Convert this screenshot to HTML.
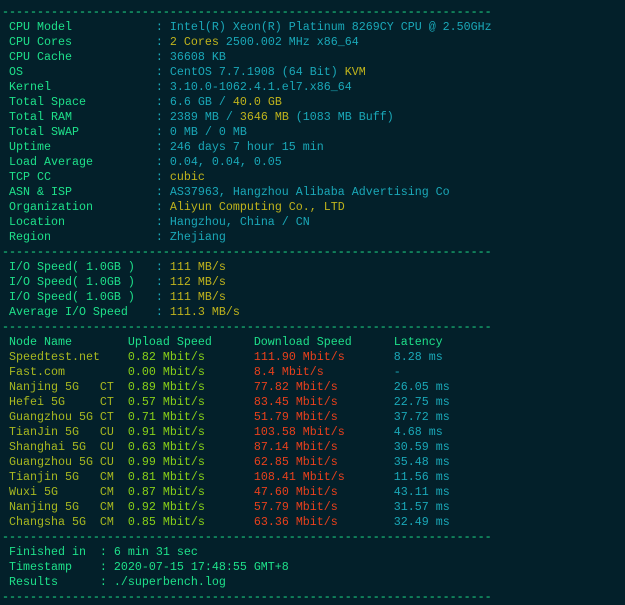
<!DOCTYPE html>
<html><head><meta charset="utf-8"><style>
html,body{margin:0;padding:0;background:#03202a;width:625px;height:604px;overflow:hidden}
pre{position:absolute;left:2px;top:5px;margin:0;font-family:"Liberation Mono",monospace;font-size:11.67px;line-height:15px;color:#1ee08a;white-space:pre}
.c{color:#1aa8b8}.y{color:#c0b41c}.o{color:#a8b820}.u{color:#88d018}.r{color:#e8401c}.g{color:#1ee08a}
</style></head><body><pre>----------------------------------------------------------------------
 CPU Model            <span class="c">: Intel(R) Xeon(R) Platinum 8269CY CPU @ 2.50GHz</span>
 CPU Cores            <span class="c">: <span class="y">2 Cores</span> 2500.002 MHz x86_64</span>
 CPU Cache            <span class="c">: 36608 KB</span>
 OS                   <span class="c">: CentOS 7.7.1908 (64 Bit) <span class="y">KVM</span></span>
 Kernel               <span class="c">: 3.10.0-1062.4.1.el7.x86_64</span>
 Total Space          <span class="c">: 6.6 GB / <span class="y">40.0 GB</span></span>
 Total RAM            <span class="c">: 2389 MB / <span class="y">3646 MB</span> (1083 MB Buff)</span>
 Total SWAP           <span class="c">: 0 MB / 0 MB</span>
 Uptime               <span class="c">: 246 days 7 hour 15 min</span>
 Load Average         <span class="c">: 0.04, 0.04, 0.05</span>
 TCP CC               <span class="c">: <span class="y">cubic</span></span>
 ASN &amp; ISP            <span class="c">: AS37963, Hangzhou Alibaba Advertising Co</span>
 Organization         <span class="c">: <span class="y">Aliyun Computing Co., LTD</span></span>
 Location             <span class="c">: Hangzhou, China / CN</span>
 Region               <span class="c">: Zhejiang</span>
----------------------------------------------------------------------
 I/O Speed( 1.0GB )   <span class="c">: <span class="y">111 MB/s</span></span>
 I/O Speed( 1.0GB )   <span class="c">: <span class="y">112 MB/s</span></span>
 I/O Speed( 1.0GB )   <span class="c">: <span class="y">111 MB/s</span></span>
 Average I/O Speed    <span class="c">: <span class="y">111.3 MB/s</span></span>
----------------------------------------------------------------------
 Node Name        Upload Speed      Download Speed      Latency
<span class="o"> Speedtest.net    </span><span class="u">0.82 Mbit/s       </span><span class="r">111.90 Mbit/s       </span><span class="c">8.28 ms</span>
<span class="o"> Fast.com         </span><span class="u">0.00 Mbit/s       </span><span class="r">8.4 Mbit/s          </span><span class="c">-</span>
<span class="o"> Nanjing 5G   CT  </span><span class="u">0.89 Mbit/s       </span><span class="r">77.82 Mbit/s        </span><span class="c">26.05 ms</span>
<span class="o"> Hefei 5G     CT  </span><span class="u">0.57 Mbit/s       </span><span class="r">83.45 Mbit/s        </span><span class="c">22.75 ms</span>
<span class="o"> Guangzhou 5G CT  </span><span class="u">0.71 Mbit/s       </span><span class="r">51.79 Mbit/s        </span><span class="c">37.72 ms</span>
<span class="o"> TianJin 5G   CU  </span><span class="u">0.91 Mbit/s       </span><span class="r">103.58 Mbit/s       </span><span class="c">4.68 ms</span>
<span class="o"> Shanghai 5G  CU  </span><span class="u">0.63 Mbit/s       </span><span class="r">87.14 Mbit/s        </span><span class="c">30.59 ms</span>
<span class="o"> Guangzhou 5G CU  </span><span class="u">0.99 Mbit/s       </span><span class="r">62.85 Mbit/s        </span><span class="c">35.48 ms</span>
<span class="o"> Tianjin 5G   CM  </span><span class="u">0.81 Mbit/s       </span><span class="r">108.41 Mbit/s       </span><span class="c">11.56 ms</span>
<span class="o"> Wuxi 5G      CM  </span><span class="u">0.87 Mbit/s       </span><span class="r">47.60 Mbit/s        </span><span class="c">43.11 ms</span>
<span class="o"> Nanjing 5G   CM  </span><span class="u">0.92 Mbit/s       </span><span class="r">57.79 Mbit/s        </span><span class="c">31.57 ms</span>
<span class="o"> Changsha 5G  CM  </span><span class="u">0.85 Mbit/s       </span><span class="r">63.36 Mbit/s        </span><span class="c">32.49 ms</span>
----------------------------------------------------------------------
 Finished in  : 6 min 31 sec
 Timestamp    : 2020-07-15 17:48:55 GMT+8
 Results      : ./superbench.log
----------------------------------------------------------------------</pre></body></html>
